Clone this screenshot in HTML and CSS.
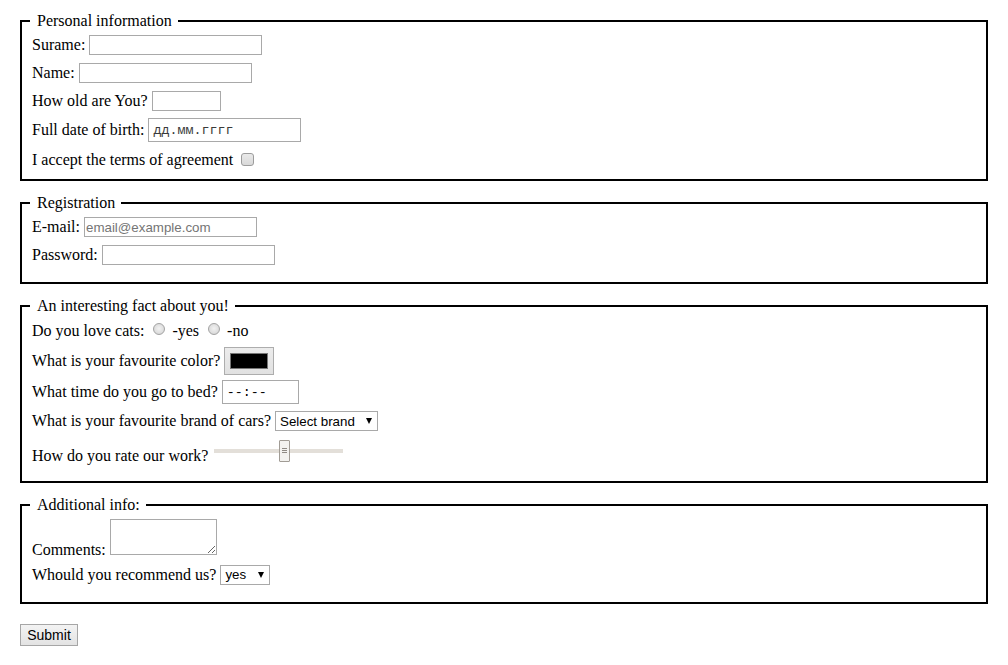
FILE: index.html
```html
<!DOCTYPE html>
<html lang="en">
<head>
<meta charset="utf-8">
<title>Form</title>
<link rel="stylesheet" href="styles.css">
</head>
<body>
<form class="form">
  <fieldset class="group group-personal">
    <legend class="group-title">Personal information</legend>
    <div class="row"><label class="label" for="surname">Surame:</label><input class="field field-text" id="surname" type="text"></div>
    <div class="row"><label class="label" for="name">Name:</label><input class="field field-text" id="name" type="text"></div>
    <div class="row"><label class="label" for="age">How old are You?</label><input class="field field-number" id="age" type="number"></div>
    <div class="row row-30"><label class="label" for="birth">Full date of birth:</label><input class="field field-mono field-date" id="birth" type="text" placeholder="дд.мм.гггг"></div>
    <div class="row row-30"><label class="label" for="terms">I accept the terms of agreement</label><input class="check" id="terms" type="checkbox"></div>
  </fieldset>

  <fieldset class="group">
    <legend class="group-title">Registration</legend>
    <div class="row"><label class="label" for="email">E-mail:</label><input class="field field-text" id="email" type="email" placeholder="email@example.com"></div>
    <div class="row"><label class="label" for="password">Password:</label><input class="field field-text" id="password" type="password"></div>
  </fieldset>

  <fieldset class="group">
    <legend class="group-title">An interesting fact about you!</legend>
    <div class="row row-30"><span class="label">Do you love cats:</span><input class="radio" id="cats-yes" type="radio" name="cats"><label class="label" for="cats-yes">-yes</label><input class="radio" id="cats-no" type="radio" name="cats"><label class="label" for="cats-no">-no</label></div>
    <div class="row row-30"><label class="label" for="color">What is your favourite color?</label><input class="color" id="color" type="color" value="#000000"></div>
    <div class="row row-32"><label class="label" for="bed">What time do you go to bed?</label><input class="field field-mono field-time" id="bed" type="text" placeholder="--:--"></div>
    <div class="row row-26"><label class="label" for="brand">What is your favourite brand of cars?</label><span class="select"><select class="select-input select-brand" id="brand"><option>Select brand</option><option>Audi</option><option>BMW</option><option>Toyota</option></select></span></div>
    <div class="row row-slider"><label class="label label-slider" for="rate">How do you rate our work?</label><input class="range" id="rate" type="range" min="0" max="100" value="55"></div>
  </fieldset>

  <fieldset class="group">
    <legend class="group-title">Additional info:</legend>
    <div class="row row-comments"><label class="label label-comments" for="comments">Comments:</label><textarea class="area" id="comments"></textarea></div>
    <div class="row row-29"><label class="label" for="recommend">Whould you recommend us?</label><span class="select"><select class="select-input select-yes" id="recommend"><option>yes</option><option>no</option></select></span></div>
  </fieldset>

  <div class="actions"><button class="submit" type="submit">Submit</button></div>
</form>
</body>
</html>
```

FILE: styles.css
```css
*, *::before, *::after { box-sizing: border-box; }

html { background: #fff; }

body {
  margin: 0;
  padding: 12px 20px;
  font-family: "Liberation Serif", "Times New Roman", serif;
  font-size: 16px;
  line-height: 18px;
  color: #000;
}

.form { margin: 0; }

.group {
  margin: 0 0 13px;
  padding: 1px 10px 13px;
  border: 2px solid #000;
  min-width: 0;
}

.group-personal { padding-bottom: 4px; }

.group-title {
  margin-left: -2px;
  padding: 0 6px 0 7px;
  font-size: 16px;
  line-height: 18px;
}

.row {
  display: flex;
  align-items: center;
  gap: 4px;
  height: 28px;
}

.row-26 { height: 26px; }
.row-29 { height: 29px; }
.row-30 { height: 30px; }
.row-32 { height: 32px; }
.row-slider { height: 34px; }
.row-comments { height: 45px; align-items: flex-end; }

.label { white-space: nowrap; }
.label-slider { margin-top: 10px; }
.label-comments { margin-bottom: 1px; }

.field {
  margin: 0;
  height: 20px;
  padding: 1px 1px;
  border: 1px solid #a9a9a9;
  border-radius: 0;
  background: #fff;
  color: #000;
  font-family: "Liberation Sans", Arial, sans-serif;
  font-size: 13.333px;
  outline: none;
}

.field::placeholder { color: #757575; opacity: 1; }

.field-text { width: 173px; }

.field-number { width: 69px; -moz-appearance: textfield; }
.field-number::-webkit-inner-spin-button,
.field-number::-webkit-outer-spin-button { -webkit-appearance: none; margin: 0; }

.field-mono {
  height: 24px;
  padding-left: 4px;
  font-family: "Liberation Mono", "Courier New", monospace;
  font-size: 13.333px;
}

.field-date { width: 153px; }
.field-date::placeholder { color: #3a3a3a; }

.field-time { width: 77px; }
.field-time::placeholder { color: #000; }

.check {
  -webkit-appearance: none;
  appearance: none;
  width: 13px;
  height: 13px;
  margin: 0 0 2px 4px;
  border: 1px solid #9c9c9c;
  border-radius: 3px;
  background: linear-gradient(#e9e9e9, #d9d9d9);
}

.radio {
  -webkit-appearance: none;
  appearance: none;
  width: 12px;
  height: 12px;
  margin: 0 3px 4px 5px;
  border: 1px solid #a3a3a3;
  border-radius: 50%;
  background: radial-gradient(circle at 50% 45%, #f2f2f2 0, #e0e0e0 55%, #cfcfcf 100%);
}

.color {
  width: 50px;
  height: 28px;
  margin: 0;
  padding: 5px;
  border: 1px solid #adadad;
  border-radius: 0;
  background: linear-gradient(#ececec, #e1e1e1);
  cursor: pointer;
}
.color::-webkit-color-swatch-wrapper { padding: 0; }
.color::-webkit-color-swatch { border: 1px solid #777; border-radius: 0; }

.select { position: relative; display: inline-flex; }
.select::after {
  content: "";
  position: absolute;
  right: 6px;
  top: 50%;
  width: 1px;
  margin-top: -3px;
  border-left: 3px solid transparent;
  border-right: 3px solid transparent;
  border-top: 6px solid #000;
  pointer-events: none;
}

.select-input {
  -webkit-appearance: none;
  appearance: none;
  margin: 0;
  height: 20px;
  padding: 0 0 0 4px;
  border: 1px solid #a9a9a9;
  border-radius: 0;
  background: #fff;
  color: #000;
  font-family: "Liberation Sans", Arial, sans-serif;
  font-size: 13.333px;
  outline: none;
}
.select-brand { width: 103px; }
.select-yes { width: 50px; }

.range {
  -webkit-appearance: none;
  appearance: none;
  width: 129px;
  height: 22px;
  margin: 0 0 0 2px;
  padding: 0;
  background: transparent;
}
.range::-webkit-slider-runnable-track {
  height: 4px;
  border: none;
  background: #e3dfd9;
}
.range::-webkit-slider-thumb {
  -webkit-appearance: none;
  width: 11px;
  height: 22px;
  margin-top: -9px;
  border: 1px solid #a19c95;
  border-radius: 1px;
  background:
    linear-gradient(#8f8a84, #8f8a84) 2px 7px / 5px 1px no-repeat,
    linear-gradient(#8f8a84, #8f8a84) 2px 9px / 5px 1px no-repeat,
    linear-gradient(#8f8a84, #8f8a84) 2px 11px / 5px 1px no-repeat,
    #f3f2ef;
}

.area {
  width: 107px;
  height: 36px;
  margin: 0 0 5px;
  padding: 2px;
  border: 1px solid #a9a9a9;
  border-radius: 0;
  resize: both;
  font-family: "Liberation Mono", "Courier New", monospace;
  font-size: 13.333px;
  outline: none;
}

.actions { padding-top: 7px; }

.submit {
  margin: 0;
  width: 58px;
  height: 22px;
  padding: 0;
  border: 1px solid #a6a6a6;
  border-radius: 0;
  background: linear-gradient(#f3f3f3, #e3e3e3);
  color: #000;
  font-family: "Liberation Sans", Arial, sans-serif;
  font-size: 14px;
}
```
